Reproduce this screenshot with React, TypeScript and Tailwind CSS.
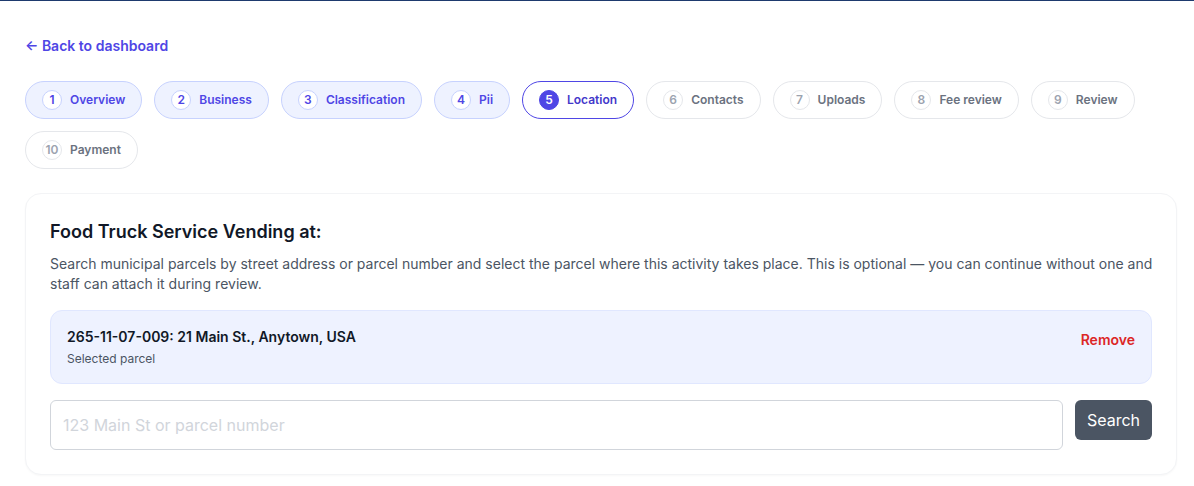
const steps = [
  { n: 1, label: "Overview", state: "done" },
  { n: 2, label: "Business", state: "done" },
  { n: 3, label: "Classification", state: "done" },
  { n: 4, label: "Pii", state: "done" },
  { n: 5, label: "Location", state: "current" },
  { n: 6, label: "Contacts", state: "todo" },
  { n: 7, label: "Uploads", state: "todo" },
  { n: 8, label: "Fee review", state: "todo" },
  { n: 9, label: "Review", state: "todo" },
  { n: 10, label: "Payment", state: "todo" },
];

const pillStyles: Record<string, string> = {
  done: "border-[#c7d2fe] bg-[#eef2ff] text-[#4f46e5]",
  current: "border-[#4f46e5] bg-white text-[#4338ca]",
  todo: "border-[#e5e7eb] bg-white text-[#6b7280]",
};

const badgeStyles: Record<string, string> = {
  done: "border-[#c7d2fe] bg-white text-[#4f46e5]",
  current: "border-[#4f46e5] bg-[#4f46e5] text-white",
  todo: "border-[#e5e7eb] bg-white text-[#9ca3af]",
};

export default function App() {
  return (
    <div className="h-[486px] overflow-hidden border-t border-[#1e3a6e] bg-white pt-[35px] pr-[17px] pl-[25px] font-['Inter',sans-serif] [font-optical-sizing:none]">
      <a href="#" className="block text-sm leading-5 font-semibold text-[#4f46e5]">
        ← Back to dashboard
      </a>

      <div className="mt-[25px] flex flex-wrap gap-3">
        {steps.map((step) => (
          <div
            key={step.n}
            className={`flex h-[38px] items-center gap-2 rounded-full border px-4 text-xs font-semibold ${pillStyles[step.state]}`}
          >
            <span
              className={`flex h-5 w-5 items-center justify-center rounded-full border text-xs ${badgeStyles[step.state]}`}
            >
              {step.n}
            </span>
            {step.label}
          </div>
        ))}
      </div>

      <div className="mt-6 rounded-2xl border border-[#f3f4f6] bg-white p-6 shadow-[0_1px_2px_rgba(0,0,0,0.03)]">
        <h2 className="text-lg leading-7 font-semibold text-[#111827]">Food Truck Service Vending at:</h2>
        <p className="mt-2 -mr-0.5 text-sm leading-5 text-[#4b5563]">
          Search municipal parcels by street address or parcel number and select the parcel where this activity takes
          place. This is optional — you can continue without one and staff can attach it during review.
        </p>

        <div className="mt-4 flex h-[74px] items-start justify-between rounded-xl border border-[#e0e7ff] bg-[#eef2ff] p-4">
          <div>
            <div className="text-sm leading-5 font-semibold text-[#111827]">265-11-07-009: 21 Main St., Anytown, USA</div>
            <div className="mt-1 text-xs leading-4 text-[#4b5563]">Selected parcel</div>
          </div>
          <button className="mt-[3px] text-sm leading-5 font-semibold text-[#dc2626]">Remove</button>
        </div>

        <div className="mt-4 flex items-start gap-3">
          <input
            placeholder="123 Main St or parcel number"
            className="h-[50px] min-w-0 flex-1 rounded-md border border-[#d1d5db] bg-white px-3 text-base outline-none placeholder:text-[#d1d5db]"
          />
          <button className="h-10 rounded-md bg-[#4b5563] px-3 text-base text-white">Search</button>
        </div>
      </div>
    </div>
  );
}
